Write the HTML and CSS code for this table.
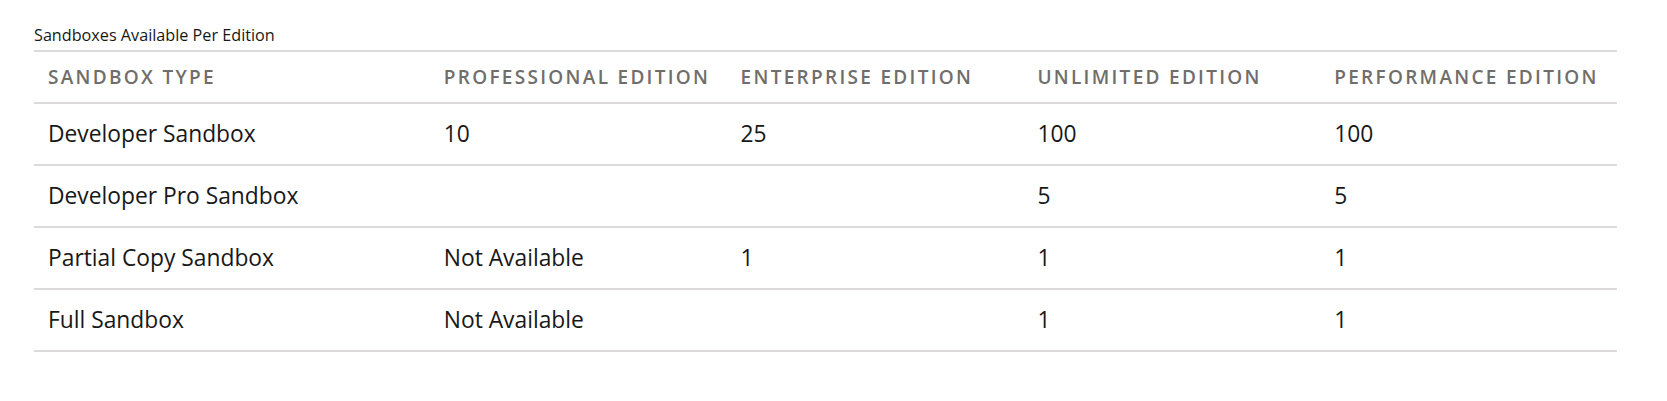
FILE: index.html
```html
<!DOCTYPE html>
<html>
<head>
<meta charset="utf-8">
<link rel="stylesheet" href="styles.css">
</head>
<body>
<div class="page">
  <table class="editions">
    <caption class="caption">Sandboxes Available Per Edition</caption>
    <colgroup>
      <col class="col-type">
      <col class="col-ed">
      <col class="col-ed">
      <col class="col-ed">
      <col class="col-ed">
    </colgroup>
    <thead>
      <tr>
        <th>Sandbox Type</th>
        <th>Professional Edition</th>
        <th>Enterprise Edition</th>
        <th>Unlimited Edition</th>
        <th>Performance Edition</th>
      </tr>
    </thead>
    <tbody>
      <tr><td>Developer Sandbox</td><td>10</td><td>25</td><td>100</td><td>100</td></tr>
      <tr><td>Developer Pro Sandbox</td><td></td><td></td><td>5</td><td>5</td></tr>
      <tr><td>Partial Copy Sandbox</td><td>Not Available</td><td>1</td><td>1</td><td>1</td></tr>
      <tr><td>Full Sandbox</td><td>Not Available</td><td></td><td>1</td><td>1</td></tr>
    </tbody>
  </table>
</div>
</body>
</html>
```

FILE: styles.css
```css
html, body {
  margin: 0;
  padding: 0;
  background: #ffffff;
}

.page {
  padding: 24px 50px 0 34px;
  font-family: "Open Sans", "Liberation Sans", sans-serif;
  color: #181818;
}

.editions {
  width: 100%;
  border-collapse: collapse;
  table-layout: fixed;
}

.caption {
  caption-side: top;
  text-align: left;
  font-size: 16.2px;
  line-height: 22px;
  color: #181818;
  padding-bottom: 4px;
}

.col-type { width: 25%; }
.col-ed { width: 18.75%; }

.editions th {
  text-align: left;
  font-size: 19px;
  font-weight: 600;
  letter-spacing: 2.3px;
  text-transform: uppercase;
  color: #706e6b;
  padding: 12px 14px;
  line-height: 26px;
  border-top: 2px solid #dddbda;
  border-bottom: 2px solid #dddbda;
}

.editions td {
  font-size: 22.8px;
  line-height: 30px;
  padding: 15px 14px;
  border-bottom: 2px solid #dddbda;
  color: #181818;
}
```
